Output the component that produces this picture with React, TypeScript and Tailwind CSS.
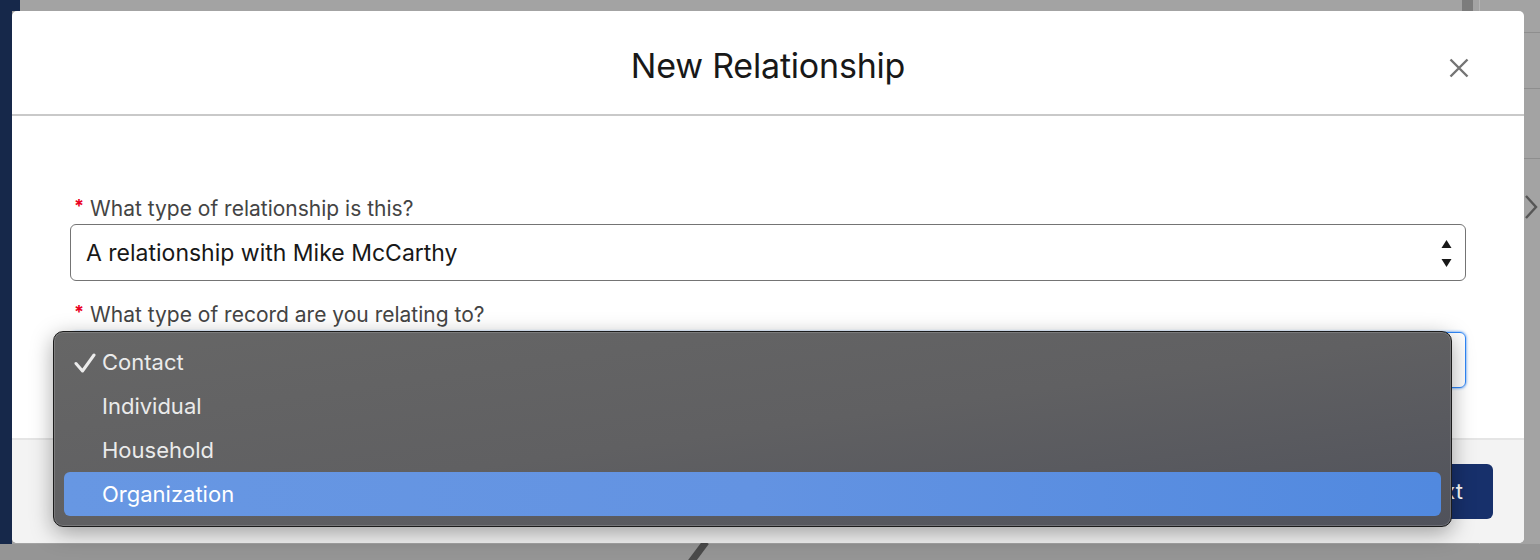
import React from "react";

function Check() {
  return (
    <svg width="22" height="20" viewBox="0 0 22 20" fill="none">
      <path d="M2 10.5 L8.5 18 L20 2" stroke="#ececec" strokeWidth="3" strokeLinecap="round" strokeLinejoin="round" />
    </svg>
  );
}

function Updown() {
  return (
    <svg width="11" height="30" viewBox="0 0 11 30">
      <polygon points="0.5,9 5.5,1 10.5,9" fill="#181818" />
      <polygon points="0.5,20 10.5,20 5.5,28" fill="#181818" />
    </svg>
  );
}

function Item({ label, checked, active }: { label: string; checked?: boolean; active?: boolean }) {
  return (
    <div
      className={
        active
          ? "relative flex h-[44px] items-center rounded-[6px] bg-linear-to-r from-[#6797e3] via-[#6393e2] to-[#5189df] pl-[38px] text-[22px] text-white"
          : "relative flex h-[44px] items-center pl-[38px] text-[22px] text-[#ebebeb]"
      }
    >
      {checked && (
        <span className="absolute left-[10px] top-[13px]">
          <Check />
        </span>
      )}
      {label}
    </div>
  );
}

function Label({ text, className }: { text: string; className: string }) {
  return (
    <div className={"flex h-[24px] items-center pl-[4px] text-[21px] leading-none text-[#444444] " + className}>
      <span className="relative top-[-2px] mr-[6px] text-[18px] font-bold text-[#ea001e]">*</span>
      {text}
    </div>
  );
}

export default function App() {
  return (
    <div className="relative flex h-[560px] w-[1540px] overflow-hidden bg-[#a3a3a3] font-['Inter','Noto_Sans',sans-serif]">
      {/* background page remnants */}
      <div className="h-full w-[12px] bg-[#16284a]" />
      <div className="absolute left-0 top-0 h-[11px] w-[20px] bg-[#16284a]" />
      <div className="absolute left-[1462px] top-0 h-[11px] w-[11px] bg-[#7c7c7c]" />
      <div className="absolute left-[1479px] top-0 h-full w-px bg-[#b4b4b4]" />
      <div className="absolute bottom-0 left-0 h-[16px] w-full bg-[#959595]" />
      <div className="absolute left-[1524px] top-[32px] h-px w-[16px] bg-[#8e8e8e]" />
      <div className="absolute left-[1524px] top-[88px] h-px w-[16px] bg-[#8e8e8e]" />
      <div className="absolute left-[1524px] top-[158px] h-px w-[16px] bg-[#8e8e8e]" />
      <svg className="absolute left-[1524px] top-[194px]" width="16" height="26" viewBox="0 0 16 26" fill="none">
        <polyline points="2,2 12,13 2,24" stroke="#565656" strokeWidth="2.4" />
      </svg>
      <svg className="absolute left-[680px] top-[540px]" width="32" height="24" viewBox="0 0 32 24" fill="none">
        <line x1="26" y1="2" x2="8" y2="26" stroke="#4a4a4a" strokeWidth="7" />
      </svg>

      {/* modal */}
      <div className="absolute left-[12px] top-[11px] flex h-[532px] w-[1512px] flex-col rounded-[5px] bg-white">
        <div className="relative flex h-[105px] items-center justify-center border-b-2 border-[#c9c9c9] pt-[6px]">
          <h1 className="text-[34px] font-normal leading-none tracking-[-0.2px] text-[#181818]">New Relationship</h1>
          <svg className="absolute right-[55px] top-[47px]" width="20" height="20" viewBox="0 0 20 20" fill="none">
            <path d="M1.5 1.5 L18.5 18.5 M18.5 1.5 L1.5 18.5" stroke="#747474" strokeWidth="2.4" />
          </svg>
        </div>

        <div className="flex flex-1 flex-col px-[58px] pt-[80px]">
          <Label text="What type of relationship is this?" className="" />
          <div className="mt-[4px] flex h-[57px] items-center justify-between rounded-[6px] border border-[#747474] pl-[15px] pr-[13px] pt-[2px] text-[23px] text-[#181818]">
            <span>A relationship with Mike McCarthy</span>
            <Updown />
          </div>
          <Label text="What type of record are you relating to?" className="mt-[21px]" />
          <div className="mt-[6px] flex h-[56px] items-center justify-between rounded-[6px] border border-[#2f86f6] pl-[15px] pr-[13px] pt-[2px] text-[23px] text-[#181818] shadow-[0_0_3px_#2f86f6]">
            <span>Contact</span>
            <Updown />
          </div>
        </div>

        <div className="flex h-[105px] items-center justify-end rounded-b-[5px] border-t-2 border-[#e5e5e5] bg-[#f3f3f3] pr-[31px]">
          <button className="h-[55px] rounded-[6px] bg-[#17306b] px-[30px] text-[22px] text-white">Next</button>
        </div>
      </div>

      {/* native select menu */}
      <div className="absolute left-[53px] top-[331px] flex h-[196px] w-[1399px] flex-col rounded-[10px] border border-[#1c1c1c] bg-linear-to-br from-[#666666] via-[#606062] to-[#50525b] px-[10px] pt-[8px] shadow-[inset_0_0_0_1px_rgba(255,255,255,0.16),0_6px_22px_rgba(0,0,0,0.35)]">
        <Item label="Contact" checked />
        <Item label="Individual" />
        <Item label="Household" />
        <Item label="Organization" active />
      </div>
    </div>
  );
}
